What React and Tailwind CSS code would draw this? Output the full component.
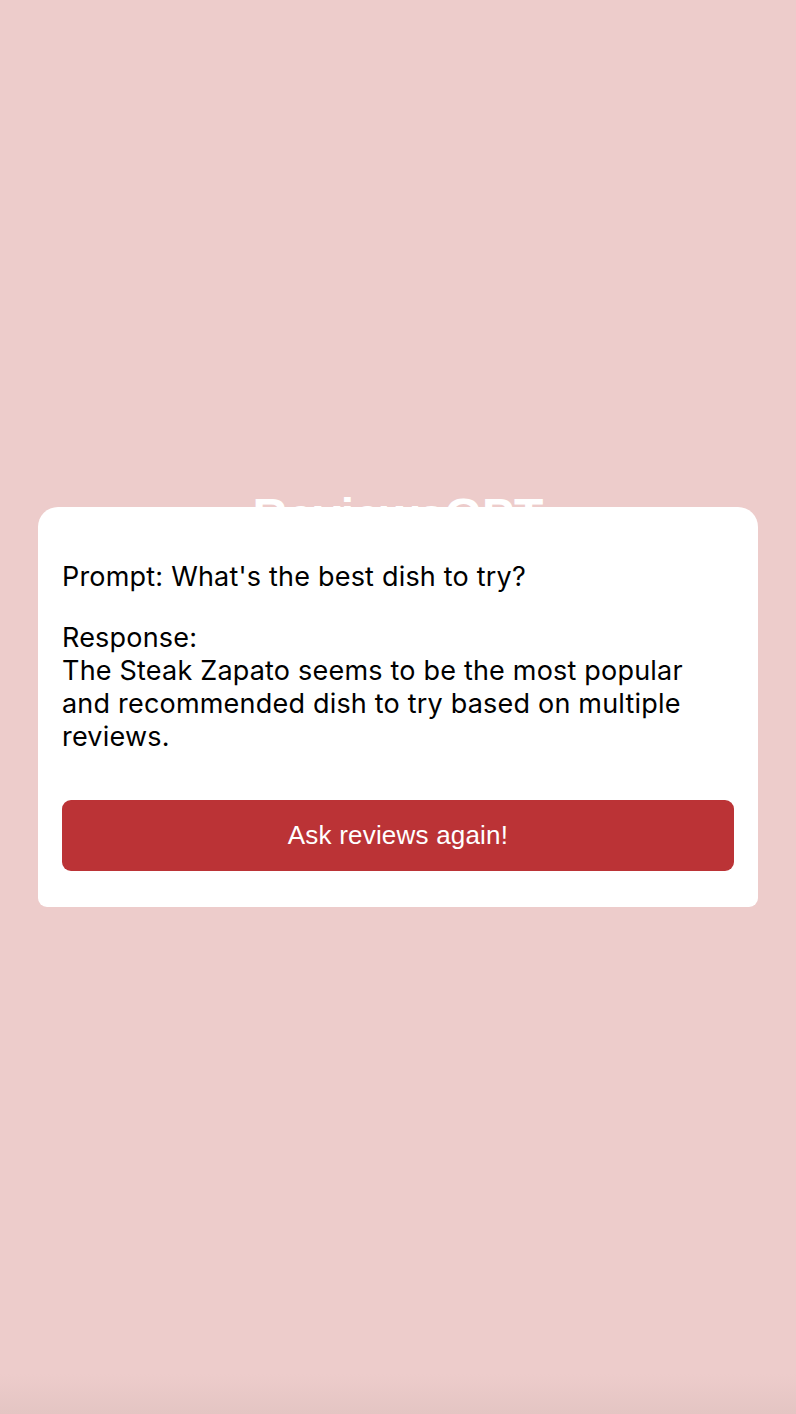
import React from 'react';

export default function App() {
  return (
    <div className="relative min-h-screen h-[1414px] bg-[#edcccb] overflow-hidden font-['Inter',sans-serif]">
      <div className="flex flex-col items-center pt-[488px]">
        <h1 className="text-white font-bold text-[48px] leading-[56px] font-['Liberation_Sans',Arial,sans-serif]">ReviewsGPT</h1>
      </div>

      <div className="absolute bottom-0 left-0 right-0 h-10 bg-gradient-to-b from-transparent to-[#e4c5c3]" />

      <div className="absolute inset-0 flex items-center justify-center px-[38px]">
        <div className="w-full bg-white rounded-t-[20px] rounded-b-[9px] px-6 pt-[53px] pb-9">
          <p className="text-black text-[27px] leading-[33px] tracking-[0.2px]">Prompt: What's the best dish to try?</p>
          <p className="text-black text-[27px] leading-[33px] tracking-[0.2px] mt-[28px]">
            Response:
            <br />
            The Steak Zapato seems to be the most popular and recommended dish to try based on multiple reviews.
          </p>
          <button className="mt-[47px] w-full h-[71px] rounded-[9px] bg-[#bb3336] text-white text-[26px] tracking-[0.2px] font-['Liberation_Sans',Arial,sans-serif]">
            Ask reviews again!
          </button>
        </div>
      </div>
    </div>
  );
}
